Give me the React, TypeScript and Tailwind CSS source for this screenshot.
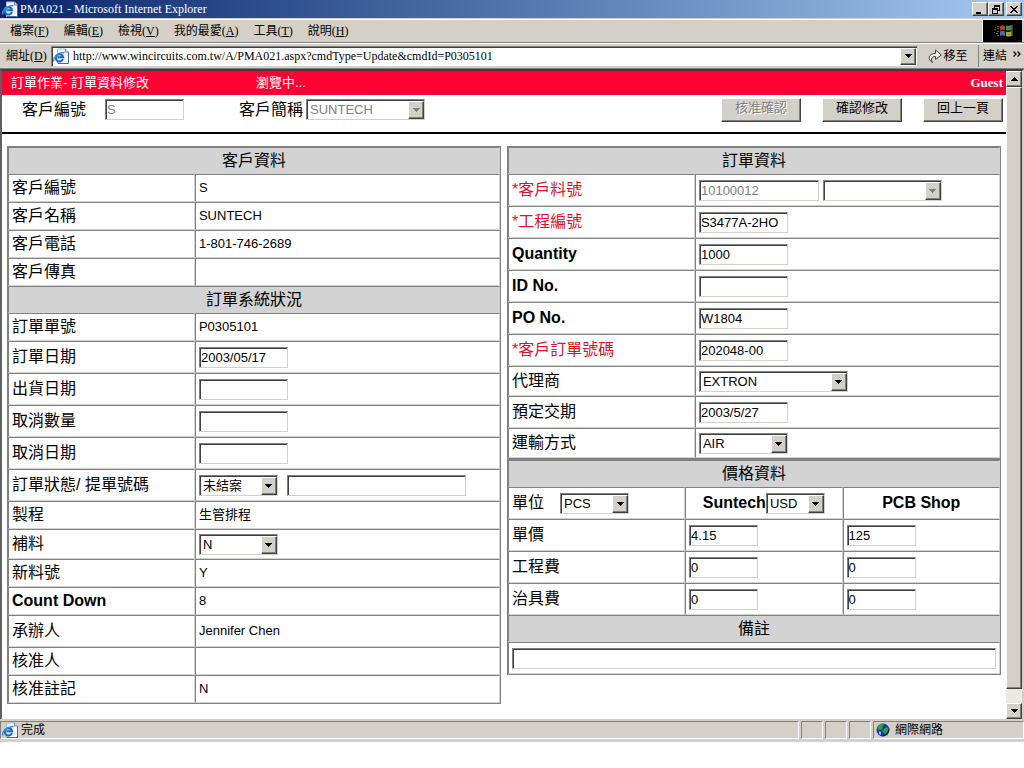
import type { ReactNode } from "react";
import clsx from "clsx";

const RAISED =
  "border border-t-white border-l-white border-r-[#404040] border-b-[#404040] bg-[#d4d0c8] shadow-[inset_-1px_-1px_0_#808080]";
const SUNKEN =
  "border border-t-[#808080] border-l-[#808080] border-r-[#d4d0c8] border-b-[#d4d0c8] shadow-[inset_1px_1px_0_#404040]";
const PANEL = "border border-t-[#808080] border-l-[#808080] border-r-white border-b-white";
const CELL =
  "border border-t-[#808080] border-l-[#808080] border-r-[#d3d3d3] border-b-[#d3d3d3] px-[3px] py-0 align-middle";

function Arrow({ up, disabled }: { up?: boolean; disabled?: boolean }) {
  return (
    <svg width="7" height="4" viewBox="0 0 7 4" shapeRendering="crispEdges" fill={disabled ? "#808080" : "#000"}>
      <path d={up ? "M3 0h1v1h1v1h1v1h1v1H0V3h1V2h1V1h1z" : "M0 0h7v1H6v1H5v1H4v1H3V3H2V2H1V1H0z"} />
    </svg>
  );
}

function PageIcon() {
  return (
    <svg className="shrink-0" width="16" height="16" viewBox="0 0 16 16">
      <path d="M4.500 1h8l3 3v11.500h-11z" fill="#f4f8ff" stroke="#a8b8d8" />
      <path d="M12.500 1v3h3" fill="#c8d8f0" stroke="#7088b8" />
      <path d="M15.500 4v11.500H5" fill="none" stroke="#4868a0" />
      <ellipse cx="6.500" cy="9.500" rx="4.500" ry="4.500" fill="#d8ecff" />
      <path
        d="M10 11.200A3.700 3.700 0 1 1 10.200 9.200H4.500"
        fill="none"
        stroke="#1868c0"
        strokeWidth="2"
      />
      <path d="M1.200 13.500C-.8 11 4 4.500 11.500 4.500" fill="none" stroke="#3890d8" strokeWidth="1.300" />
    </svg>
  );
}

function WindowsFlag() {
  return (
    <svg width="24" height="18" viewBox="0 0 24 18">
      <path d="M9 4q2.500-1.500 5 0v4.500q-2.500-1.300-5 0z" fill="#a84030" />
      <path d="M15 3.500q2.500 1.200 5.500-.5v5q-3 1.200-5.500 0z" fill="#4c8c48" />
      <path d="M9 9.500q2.500-1.300 5 0V14q-2.500-1.300-5 0z" fill="#4070b0" />
      <path d="M15 9.500q2.500 1.200 5.500-.5v5q-3 1.200-5.500 0z" fill="#b0a040" />
      <path d="M20.500 3h1v11h-1z" fill="#807850" />
      <g fill="#984048">
        <path d="M6 4h2v1H6zM6 6h2v1H6zM4 5h1v1H4zM3 7h2v1H3z" />
      </g>
      <g fill="#405898">
        <path d="M6 9h2v1H6zM5 11h2v1H5zM3 10h1v1H3zM6 13h2v1H6z" />
      </g>
    </svg>
  );
}

function Globe() {
  return (
    <svg width="14" height="14" viewBox="0 0 14 14">
      <circle cx="7" cy="7" r="6.500" fill="#1038a8" />
      <path d="M2 3q2-2.500 5-2.500l1 2-2 1 1 2-2 1-3 0-1-1z" fill="#30a040" />
      <path d="M8 6l3-2 2 2-1 3-3 3-1-2-2-2z" fill="#30a040" />
      <path d="M3 8l2 1 0 3-2-1z" fill="#80c8e8" />
      <path d="M13 5a6.500 6.500 0 0 1-8 8q6-1 8-8z" fill="#061850" />
    </svg>
  );
}

function GoIcon() {
  return (
    <svg width="14" height="14" viewBox="0 0 14 14">
      <path
        d="M4.500 13.500C-.5 11 0 4.500 7.500 4.500V1L13.300 6 7.500 10.500V7.500C3.500 7.200 2.500 10 4.500 13.500z"
        fill="#f4f2ec"
        stroke="#404040"
        strokeLinejoin="round"
      />
    </svg>
  );
}

interface TextInputProps {
  id?: string;
  label?: string;
  value?: string;
  width: string;
  disabled?: boolean;
}

function TextInput({ id, label, value = "", width, disabled }: TextInputProps) {
  return (
    <input
      id={id}
      type="text"
      aria-label={label}
      defaultValue={value}
      disabled={disabled}
      className={clsx(
        "block h-[21px] bg-white pl-px text-[13px] leading-4 outline-none",
        SUNKEN,
        width,
        disabled ? "text-[#808080]" : "text-black",
      )}
    />
  );
}

interface SelectBoxProps {
  id?: string;
  label?: string;
  options: string[];
  width: string;
  disabled?: boolean;
}

function SelectBox({ id, label, options, width, disabled }: SelectBoxProps) {
  return (
    <span className={clsx("relative block h-[21px] font-normal", width)}>
      <select
        id={id}
        aria-label={label}
        disabled={disabled}
        className={clsx(
          "block h-[21px] w-full appearance-none bg-white pt-px pl-[3px] text-[13px] leading-4 opacity-100 outline-none",
          SUNKEN,
          disabled ? "text-[#808080]" : "text-black",
        )}
      >
        {options.map((option) => (
          <option key={option}>{option}</option>
        ))}
      </select>
      <span
        className={clsx(
          "pointer-events-none absolute top-[2px] right-px bottom-px flex w-4 items-center justify-center",
          RAISED,
        )}
      >
        <Arrow disabled={disabled} />
      </span>
    </span>
  );
}

function Section({ title, span }: { title: string; span: number }) {
  return (
    <tr className="h-[27px]">
      <th colSpan={span} className={clsx(CELL, "bg-[#d3d3d3] text-center text-base leading-5 font-normal")}>
        {title}
      </th>
    </tr>
  );
}

interface RowProps {
  label: string;
  htmlFor?: string;
  height?: string;
  required?: boolean;
  bold?: boolean;
  children?: ReactNode;
}

function Row({ label, htmlFor, height = "h-7", required, bold, children }: RowProps) {
  return (
    <tr className={height}>
      <th
        scope="row"
        className={clsx(
          CELL,
          "text-left text-base leading-5",
          bold ? "font-bold" : "font-normal",
          required && "text-[#dc1428]",
        )}
      >
        {htmlFor ? <label htmlFor={htmlFor}>{label}</label> : label}
      </th>
      <td className={clsx(CELL, "text-[13px] leading-4")}>{children}</td>
    </tr>
  );
}

function WindowButton({ label, children }: { label: string; children: ReactNode }) {
  return (
    <button aria-label={label} className={clsx("flex h-[14px] w-4 items-center justify-center", RAISED)}>
      <svg width="10" height="9" viewBox="0 0 10 9" shapeRendering="crispEdges">
        {children}
      </svg>
    </button>
  );
}

const menus = [
  ["檔案", "F"],
  ["編輯", "E"],
  ["檢視", "V"],
  ["我的最愛", "A"],
  ["工具", "T"],
  ["說明", "H"],
];

function BrowserBars() {
  return (
    <header className="bg-[#d4d0c8] font-['Liberation_Serif','Noto_Sans_CJK_TC',serif] text-xs leading-4">
      <div className="flex h-[18px] items-center justify-between bg-linear-to-r from-[#0a246a] to-[#a6caf0] pr-[2px] pl-[2px] text-white">
        <h1 className="flex items-center gap-[2px]">
          <PageIcon />
          PMA021 - Microsoft Internet Explorer
        </h1>
        <div className="flex">
          <WindowButton label="最小化">
            <path d="M1 7h5v2H1z" />
          </WindowButton>
          <WindowButton label="還原">
            <path d="M3 0h6v6H7V5h1V2H4v1H3zM1 3h6v6H1zM2 5v3h4V5z" fillRule="evenodd" />
          </WindowButton>
          <span className="w-[2px]" />
          <WindowButton label="關閉">
            <path d="M1 1h2v1h1v1h2V2h1V1h2v1H8v1H7v1H6v1h1v1h1v1h1v1H7V7H6V6H4v1H3v1H1V7h1V6h1V5h1V4H3V3H2V2H1z" />
          </WindowButton>
        </div>
      </div>

      <div className="mt-px flex h-6 items-stretch border-t border-b border-t-white border-b-[#808080]">
        <nav className="flex flex-1 items-center gap-[15px] pl-[10px]">
          {menus.map(([text, key]) => (
            <button key={key}>
              {text}(<u>{key}</u>)
            </button>
          ))}
        </nav>
        <div className="mr-[2px] flex w-10 items-center justify-center border-l border-l-white bg-black">
          <WindowsFlag />
        </div>
      </div>

      <div className="flex h-[26px] items-center border-t border-b border-t-white border-b-[#808080]">
        <label htmlFor="address" className="w-[51px] pl-[6px]">
          網址(<u>D</u>)
        </label>
        <div className={clsx("flex h-[21px] flex-1 items-center bg-white py-[2px] pr-px pl-px", SUNKEN)}>
          <PageIcon />
          <input
            id="address"
            type="text"
            defaultValue="http://www.wincircuits.com.tw/A/PMA021.aspx?cmdType=Update&cmdId=P0305101"
            className="h-4 flex-1 pl-1 outline-none"
          />
          <button aria-label="網址清單" className={clsx("flex h-[17px] w-4 items-center justify-center", RAISED)}>
            <Arrow />
          </button>
        </div>
        <button className="flex w-[60px] items-center justify-center gap-px">
          <GoIcon />
          移至
        </button>
        <button className="flex h-[22px] w-[46px] items-center justify-between border-l border-l-[#808080] pr-[3px] pl-1">
          連結
          <svg width="8" height="6" viewBox="0 0 8 6" className="mb-1" fill="none" stroke="#000" strokeWidth="1.300">
            <path d="M.5 .5L3 3 .5 5.500M4.500 .5L7 3 4.500 5.500" />
          </svg>
        </button>
      </div>
    </header>
  );
}

function CustomerTable() {
  return (
    <table className="w-full table-fixed border-separate border-spacing-0 border border-[#808080]">
      <colgroup>
        <col className="w-[38%]" />
        <col />
      </colgroup>
      <tbody>
        <Section title="客戶資料" span={2} />
        <Row label="客戶編號">S</Row>
        <Row label="客戶名稱">SUNTECH</Row>
        <Row label="客戶電話">1-801-746-2689</Row>
        <Row label="客戶傳真" />
        <Section title="訂單系統狀況" span={2} />
        <Row label="訂單單號">P0305101</Row>
        <Row label="訂單日期" htmlFor="order-date" height="h-8">
          <TextInput id="order-date" value="2003/05/17" width="w-[89px]" />
        </Row>
        <Row label="出貨日期" htmlFor="ship-date" height="h-8">
          <TextInput id="ship-date" width="w-[89px]" />
        </Row>
        <Row label="取消數量" htmlFor="cancel-qty" height="h-8">
          <TextInput id="cancel-qty" width="w-[89px]" />
        </Row>
        <Row label="取消日期" htmlFor="cancel-date" height="h-8">
          <TextInput id="cancel-date" width="w-[89px]" />
        </Row>
        <Row label="訂單狀態/ 提單號碼" htmlFor="order-state" height="h-8">
          <div className="flex gap-[9px]">
            <SelectBox id="order-state" options={["未結案"]} width="w-[79px]" />
            <TextInput label="提單號碼" width="w-[179px]" />
          </div>
        </Row>
        <Row label="製程">生管排程</Row>
        <Row label="補料" htmlFor="refill" height="h-[30px]">
          <SelectBox id="refill" options={["N"]} width="w-[79px]" />
        </Row>
        <Row label="新料號">Y</Row>
        <Row label="Count Down" bold>
          8
        </Row>
        <Row label="承辦人" height="h-8">
          Jennifer Chen
        </Row>
        <Row label="核准人" />
        <Row label="核准註記">N</Row>
      </tbody>
    </table>
  );
}

function OrderTable() {
  return (
    <table className="w-full table-fixed border-separate border-spacing-0 border border-[#808080]">
      <colgroup>
        <col className="w-[38%]" />
        <col />
      </colgroup>
      <tbody>
        <Section title="訂單資料" span={2} />
        <Row label="*客戶料號" htmlFor="part-no" height="h-8" required>
          <div className="flex gap-1">
            <TextInput id="part-no" value="10100012" width="w-[120px]" disabled />
            <SelectBox label="客戶料號清單" options={[""]} width="w-[119px]" disabled />
          </div>
        </Row>
        <Row label="*工程編號" htmlFor="eng-no" height="h-8" required>
          <TextInput id="eng-no" value="S3477A-2HO" width="w-[89px]" />
        </Row>
        <Row label="Quantity" htmlFor="quantity" height="h-8" bold>
          <TextInput id="quantity" value="1000" width="w-[89px]" />
        </Row>
        <Row label="ID No." htmlFor="id-no" height="h-8" bold>
          <TextInput id="id-no" width="w-[89px]" />
        </Row>
        <Row label="PO No." htmlFor="po-no" height="h-8" bold>
          <TextInput id="po-no" value="W1804" width="w-[89px]" />
        </Row>
        <Row label="*客戶訂單號碼" htmlFor="customer-po" height="h-8" required>
          <TextInput id="customer-po" value="202048-00" width="w-[89px]" />
        </Row>
        <Row label="代理商" htmlFor="agent" height="h-[30px]">
          <SelectBox id="agent" options={["EXTRON"]} width="w-[149px]" />
        </Row>
        <Row label="預定交期" htmlFor="due-date" height="h-8">
          <TextInput id="due-date" value="2003/5/27" width="w-[89px]" />
        </Row>
        <Row label="運輸方式" htmlFor="shipping" height="h-[30px]">
          <SelectBox id="shipping" options={["AIR"]} width="w-[89px]" />
        </Row>
      </tbody>
    </table>
  );
}

const prices = [
  { label: "單價", suntech: "4.15", shop: "125" },
  { label: "工程費", suntech: "0", shop: "0" },
  { label: "治具費", suntech: "0", shop: "0" },
];

function PriceTable() {
  return (
    <table className="w-full table-fixed border-separate border-spacing-0 border border-[#808080] text-base leading-5">
      <colgroup>
        <col className="w-[36%]" />
        <col className="w-[32%]" />
        <col className="w-[32%]" />
      </colgroup>
      <tbody>
        <Section title="價格資料" span={3} />
        <tr className="h-8">
          <th className={clsx(CELL, "font-normal")}>
            <div className="flex items-center gap-4">
              <label htmlFor="unit">單位</label>
              <SelectBox id="unit" options={["PCS"]} width="w-[69px]" />
            </div>
          </th>
          <th className={clsx(CELL, "font-bold")}>
            <div className="flex items-center justify-center">
              <label htmlFor="currency">Suntech</label>
              <SelectBox id="currency" options={["USD"]} width="w-[59px]" />
            </div>
          </th>
          <th className={clsx(CELL, "text-center font-bold")}>PCB Shop</th>
        </tr>
        {prices.map((price) => (
          <tr key={price.label} className="h-8">
            <th scope="row" className={clsx(CELL, "text-left font-normal")}>
              {price.label}
            </th>
            <td className={CELL}>
              <TextInput label={`Suntech ${price.label}`} value={price.suntech} width="w-[69px]" />
            </td>
            <td className={CELL}>
              <TextInput label={`PCB Shop ${price.label}`} value={price.shop} width="w-[69px]" />
            </td>
          </tr>
        ))}
        <Section title="備註" span={3} />
        <tr className="h-8">
          <td colSpan={3} className={CELL}>
            <TextInput label="備註" width="w-full" />
          </td>
        </tr>
      </tbody>
    </table>
  );
}

function FormButton({ children, disabled }: { children: ReactNode; disabled?: boolean }) {
  return (
    <button
      disabled={disabled}
      className={clsx(
        "h-6 w-20 pb-1 text-[13px] leading-4",
        RAISED,
        disabled && "text-[#808080] text-shadow-[1px_1px_0_#fff]",
      )}
    >
      {children}
    </button>
  );
}

function Scrollbar() {
  return (
    <div className="flex w-4 shrink-0 flex-col bg-[#ebe9e4]">
      <button aria-label="向上捲動" className={clsx("flex h-4 items-center justify-center", RAISED)}>
        <Arrow up />
      </button>
      <div className={clsx("mb-[14px] flex-1", RAISED)} />
      <button aria-label="向下捲動" className={clsx("flex h-4 items-center justify-center", RAISED)}>
        <Arrow />
      </button>
    </div>
  );
}

function StatusBar() {
  return (
    <footer className="flex h-[23px] gap-[2px] border-b border-b-[#d4d0c8] bg-[#d4d0c8] pt-[2px] pb-[2px] font-['Liberation_Serif','Noto_Sans_CJK_TC',serif] text-xs leading-4 shadow-[0_1px_0_#808080]">
      <div className={clsx("flex flex-1 items-center gap-[3px] pl-px", PANEL)}>
        <PageIcon />
        完成
      </div>
      <div className={clsx("w-[22px]", PANEL)} />
      <div className={clsx("w-[22px]", PANEL)} />
      <div className={clsx("w-[22px]", PANEL)} />
      <div className={clsx("flex w-[151px] items-center gap-[5px] pl-[2px]", PANEL)}>
        <Globe />
        網際網路
      </div>
    </footer>
  );
}

export default function App() {
  return (
    <div className="bg-white font-['Liberation_Sans','Noto_Sans_CJK_TC',sans-serif] text-black">
      <BrowserBars />

      <div className="flex border-t-2 border-r-2 border-l-2 border-t-[#404040] border-r-[#d4d0c8] border-l-[#606060]">
        <main className="min-w-0 flex-1">
          <div className="flex h-6 items-center bg-[#ff0033] pr-[3px] pl-[9px] text-[13px] leading-4 text-white">
            <h2 className="w-[245px]">訂單作業- 訂單資料修改</h2>
            <span>瀏覽中...</span>
            <span className="ml-auto font-['Liberation_Serif',serif] font-bold">Guest</span>
          </div>

          <div className="flex h-[39px] items-start border-b-2 border-black pt-[3px] pr-[3px] pl-5 text-base leading-6">
            <label htmlFor="customer-no" className="mr-[19px]">
              客戶編號
            </label>
            <div className="mr-[55px] pt-px">
              <TextInput id="customer-no" value="S" width="w-[79px]" disabled />
            </div>
            <label htmlFor="customer-name" className="mr-[3px]">
              客戶簡稱
            </label>
            <div className="pt-px">
              <SelectBox id="customer-name" options={["SUNTECH"]} width="w-[119px]" disabled />
            </div>
            <div className="ml-auto flex gap-[21px]">
              <FormButton disabled>核准確認</FormButton>
              <FormButton>確認修改</FormButton>
              <FormButton>回上一頁</FormButton>
            </div>
          </div>

          <div className="flex items-start gap-[6px] px-[5px] pt-3 pb-[15px]">
            <div className="min-w-0 flex-1">
              <CustomerTable />
            </div>
            <div className="min-w-0 flex-1">
              <OrderTable />
              <PriceTable />
            </div>
          </div>
        </main>
        <Scrollbar />
      </div>

      <StatusBar />
    </div>
  );
}
